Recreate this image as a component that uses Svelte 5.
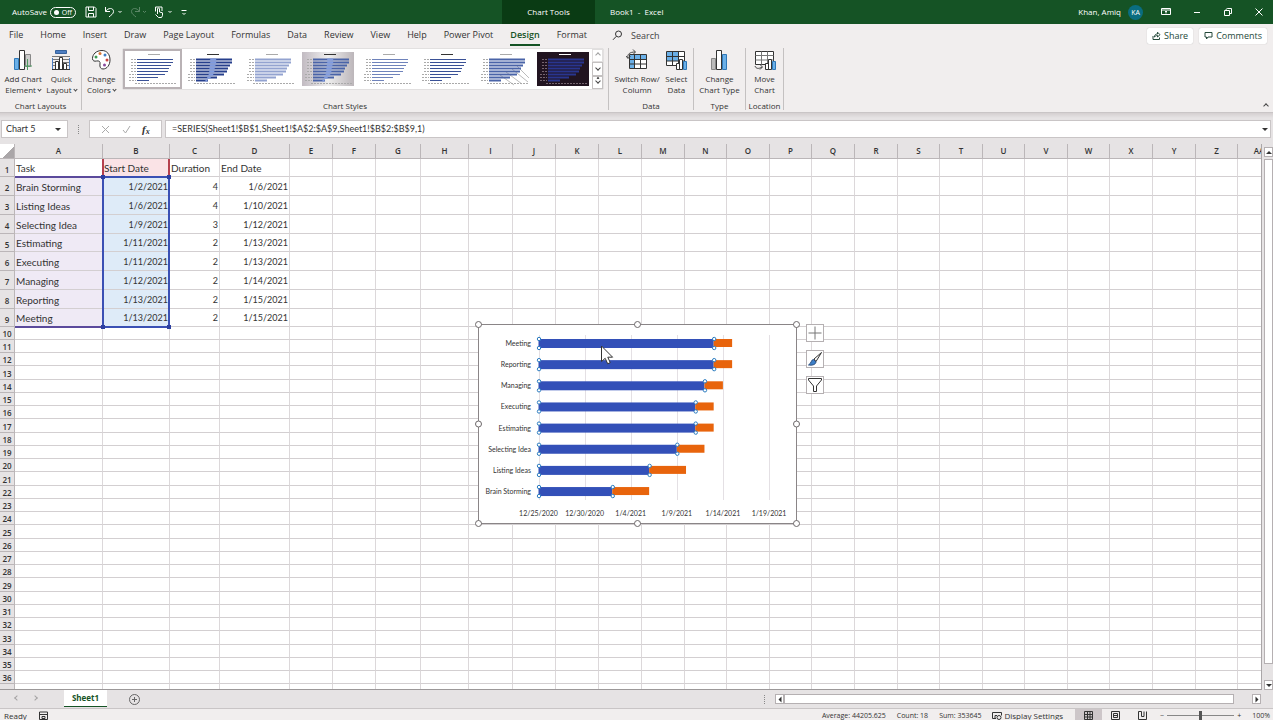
<script lang="ts">
  type Task = { name: string; start: string; duration: number; end: string; offset: number };

  const tabs = ["File", "Home", "Insert", "Draw", "Page Layout", "Formulas", "Data", "Review", "View", "Help", "Power Pivot", "Design", "Format"];

  // offset is the number of days since 12/25/2020
  const tasks: Task[] = [
    { name: "Brain Storming", start: "1/2/2021", duration: 4, end: "1/6/2021", offset: 8 },
    { name: "Listing Ideas", start: "1/6/2021", duration: 4, end: "1/10/2021", offset: 12 },
    { name: "Selecting Idea", start: "1/9/2021", duration: 3, end: "1/12/2021", offset: 15 },
    { name: "Estimating", start: "1/11/2021", duration: 2, end: "1/13/2021", offset: 17 },
    { name: "Executing", start: "1/11/2021", duration: 2, end: "1/13/2021", offset: 17 },
    { name: "Managing", start: "1/12/2021", duration: 2, end: "1/14/2021", offset: 18 },
    { name: "Reporting", start: "1/13/2021", duration: 2, end: "1/15/2021", offset: 19 },
    { name: "Meeting", start: "1/13/2021", duration: 2, end: "1/15/2021", offset: 19 }
  ];
  const bars = [...tasks].reverse();
  const axis = ["12/25/2020", "12/30/2020", "1/4/2021", "1/9/2021", "1/14/2021", "1/19/2021"];

  const columns = [..."ABCDEFGHIJKLMNOPQRSTUVWXYZ", "AA"];
  const widths = [88, 67, 50, 70, 43, 43, 45, 48, 44, 43, 43, 43, 43, 42, 43, 42, 43, 43, 42, 43, 42, 43, 42, 43, 43, 42, 43];
  const emptyCols = columns.slice(4);
  const emptyRows = Array.from({ length: 28 }, (_, i) => i + 10);

  const styles = ["plain", "bold", "light", "shaded", "thin", "plain", "lined", "dark"];
  const lengths = [36, 36, 34, 32, 31, 28, 21, 12];

  const barX = (days: number) => 64.5 + days * 9.22;
  const barY = (i: number) => 20 + i * 21.15;

  let active = "Design";
  let autosave = false;
  let name = "Chart 5";
  let formula = "=SERIES(Sheet1!$B$1,Sheet1!$A$2:$A$9,Sheet1!$B$2:$B$9,1)";
  let search = "";
  let zoom = 100;
  let picked = 0;
</script>

<div class="window">
  <header class="title">
    <div class="quick">
      <label class="autosave">
        AutoSave
        <input type="checkbox" bind:checked={autosave} />
        <span class="switch"><i></i>{autosave ? "On" : "Off"}</span>
      </label>
      <button aria-label="Save">
        <svg width="12" height="12" viewBox="0 0 12 12"><path d="M1 1h8.5L11 2.500V11H1zM3.500 1v3.500h5V1M3.500 11V7.500h5V11" /></svg>
      </button>
      <button aria-label="Undo">
        <svg width="19" height="12" viewBox="0 0 19 12"><path d="M1.500 1v4.500H6M1.500 5.500C4 1.500 9.500 1.500 9.500 5.500 9.500 8 7 9 5 11M14.500 5l1.500 1.500L17.500 5" /></svg>
      </button>
      <button class="faded" aria-label="Redo">
        <svg width="17" height="12" viewBox="0 0 17 12"><path d="M9.500 1v4.500H5M9.500 5.500C7 1.500 1.500 1.500 1.500 5.500 1.500 8 4 9 6 11M13 5l1.500 1.500L16 5" /></svg>
      </button>
      <button aria-label="Touch mode">
        <svg width="19" height="12" viewBox="0 0 19 12"><path d="M3.500 8V3a1 1 0 0 1 2 0v3l3 .8v2.700L7.500 11.500h-3L1.500 8.500M1.500 5.500V1h6.500v4M14.500 5L16 6.500 17.500 5" /></svg>
      </button>
      <button aria-label="Customize quick access">
        <svg width="8" height="12" viewBox="0 0 8 12"><path d="M1.500 4.500h5M2.500 7L4 8.500 5.500 7" /></svg>
      </button>
    </div>
    <div class="tools">Chart Tools</div>
    <div class="book">Book1&nbsp; - &nbsp;Excel</div>
    <div class="account">
      <span>Khan, Amiq</span>
      <span class="avatar">KA</span>
    </div>
    <div class="controls">
      <button aria-label="Ribbon display options">
        <svg width="10" height="10" viewBox="0 0 10 10"><path d="M.5 1.500h9v6h-9zM.5 3h9M5 6.500V4M4 5l1-1 1 1" /></svg>
      </button>
      <button aria-label="Minimize"><svg width="10" height="10" viewBox="0 0 10 10"><path d="M2 5.500h6" /></svg></button>
      <button aria-label="Restore">
        <svg width="10" height="10" viewBox="0 0 10 10"><path d="M1.500 3.500h5v5h-5zM3 3.500c0-2 1-2 2-2h3.500v5h-2" /></svg>
      </button>
      <button aria-label="Close"><svg width="10" height="10" viewBox="0 0 10 10"><path d="M1.500 1.500l7 7M8.500 1.500l-7 7" /></svg></button>
    </div>
  </header>

  <nav class="tabs">
    {#each tabs as tab}
      <button class:active={active == tab} on:click={() => (active = tab)}>{tab}</button>
    {/each}
    <label class="search">
      <svg width="11" height="11" viewBox="0 0 11 11"><circle cx="6.500" cy="4" r="3" /><path d="M4.300 6.300L1 9.800" /></svg>
      <input aria-label="Search" placeholder="Search" bind:value={search} />
    </label>
    <div class="share">
      <button>
        <svg width="9" height="9" viewBox="0 0 9 9"><path d="M1 5v3.500h6.500V6.500M2.500 6C2.500 3.500 4 3 5.500 3V1.200L8 3.700 5.500 6V4.500C4 4.500 3.500 5 2.500 6z" /></svg>
        Share
      </button>
      <button>
        <svg width="9" height="9" viewBox="0 0 9 9"><path d="M1 1.500h7v4.500H4L2.500 8V6H1z" /></svg>
        Comments
      </button>
    </div>
  </nav>

  <section class="ribbon">
    <div class="group layouts">
      <div class="items">
        <button class="big">
          <svg width="22" height="22" viewBox="0 0 22 22">
            <path d="M2.500 9.500h4v11h-4z" fill="#6bb0e8" stroke="#2f78b8" />
            <path d="M7.500 1.500h5v19h-5z" fill="#fff" stroke="#333" />
            <path d="M13.500 5.500h5v12h-5z" fill="#ccc" stroke="#888" />
            <path d="M15.500 10v11M12 17h8" stroke="#4f9c62" />
          </svg>
          <span>Add Chart<br />Element <i class="caret"></i></span>
        </button>
        <button class="big">
          <svg width="22" height="22" viewBox="0 0 22 22">
            <path d="M5.500 1.500h11v3h-11z" fill="#4d7ec2" stroke="#35619c" />
            <path d="M2 7.500h18M2 10.500h18M2 13.500h18M2 16.500h18" stroke="#777" />
            <path d="M2.500 9v11M19.500 9v11" stroke="#4d7ec2" />
            <path d="M5.500 12.500h3v8h-3zM9.500 8.500h3v12h-3zM13.500 14.500h3v6h-3z" fill="#fff" stroke="#333" />
            <path d="M2 20.500h18" stroke="#333" />
          </svg>
          <span>Quick<br />Layout <i class="caret"></i></span>
        </button>
      </div>
      <span class="caption">Chart Layouts</span>
    </div>

    <div class="group chartstyles">
      <div class="items">
        <button class="big">
          <svg width="22" height="22" viewBox="0 0 22 22">
            <path d="M12 1.500c-6 0-9.500 4-9.500 8 0 2.500 2 3 4 2.500 2.500-.5 4 .5 3.500 3-.5 3 .5 5 3 5 4 0 7-4 7-9 0-5.500-3-9.500-8-9.500z" fill="#fff" stroke="#333" />
            <g stroke="none"><circle cx="6" cy="8" r="1.500" fill="#3d9a54" /><circle cx="10" cy="4.500" r="1.500" fill="#d87434" /><circle cx="15" cy="6" r="1.500" fill="#3d7cc4" /><circle cx="17" cy="11" r="1.500" fill="#c94141" /><circle cx="14.500" cy="16" r="1.500" fill="#8a4a9c" /></g>
          </svg>
          <span>Change<br />Colors <i class="caret"></i></span>
        </button>
        <div class="gallery">
          {#each styles as style, i}
            <button class="thumb {style}" class:picked={picked == i} aria-label="Style {i + 1}" on:click={() => (picked = i)}>
              <svg width="52" height="34" viewBox="0 0 52 34">
                <path class="head" d="M22 2.500h12" />
                {#if style == "lined"}
                  <path class="hatch" d="M22 23l14 10M28 20l16 12M34 17l16 13M39 14l12 12" />
                {/if}
                {#each lengths as len, n}
                  <path class="tick" d="M{n > 4 ? 3 : 5} {7.5 + n * 3}H10" />
                  <path class="bar" d="M11 {7.5 + n * 3}h{len}" />
                  {#if style == "bold" || style == "shaded"}
                    <path class="shine" d="M{18 + len / 5} {7.5 + n * 3}h{len / 6}" />
                  {/if}
                {/each}
                <path class="foot" d="M9 31.500h42" />
              </svg>
            </button>
          {/each}
          <div class="pager">
            <button class="off" aria-label="Previous styles"><i class="arrow up"></i></button>
            <button aria-label="Next styles"><i class="arrow"></i></button>
            <button aria-label="More styles"><i class="arrow more"></i></button>
          </div>
        </div>
      </div>
      <span class="caption">Chart Styles</span>
    </div>

    <div class="group data">
      <div class="items">
        <button class="big">
          <svg width="22" height="22" viewBox="0 0 22 22">
            <path d="M3.500 5.500h17v14h-17z" fill="#fff" stroke="#333" />
            <path d="M4 6h16v4H4zM4 10h4v9H4z" fill="#6bb0e8" stroke="none" />
            <path d="M3.500 10.500h17M3.500 15h17M8.500 5.500v14M14.500 5.500v14" stroke="#333" />
            <path d="M2 9C1 5 4 3 9 3M7 .5L9.500 3 7 5.500M0 7l2 2.500L4.500 7" stroke="#444" />
          </svg>
          <span>Switch Row/<br />Column</span>
        </button>
        <button class="big">
          <svg width="22" height="22" viewBox="0 0 22 22">
            <path d="M1.500 2.500h18v14h-18z" fill="#fff" stroke="#333" />
            <path d="M2 3h11v9H2z" fill="#6bb0e8" stroke="none" />
            <path d="M1.500 7.500h18M1.500 12h18M7.500 2.500v14M13.500 2.500v14" stroke="#333" />
            <path d="M11.500 14.500h3v6h-3zM14.500 10.500h3v10h-3z" fill="#fff" stroke="#333" />
            <path d="M18.500 12.500h3v8h-3z" fill="#6bb0e8" stroke="#2f78b8" />
          </svg>
          <span>Select<br />Data</span>
        </button>
      </div>
      <span class="caption">Data</span>
    </div>

    <div class="group type">
      <div class="items">
        <button class="big">
          <svg width="22" height="22" viewBox="0 0 22 22">
            <path d="M3.500 9.500h4v11h-4z" fill="#bbb" stroke="#888" />
            <path d="M8.500 1.500h5v19h-5z" fill="#fff" stroke="#333" />
            <path d="M14.500 5.500h4v15h-4z" fill="#6bb0e8" stroke="#2f78b8" />
          </svg>
          <span>Change<br />Chart Type</span>
        </button>
      </div>
      <span class="caption">Type</span>
    </div>

    <div class="group location">
      <div class="items">
        <button class="big">
          <svg width="22" height="22" viewBox="0 0 22 22">
            <path d="M1.500 2.500h18v13h-18z" fill="#fff" stroke="#333" />
            <path d="M1.500 6.500h18M1.500 11h18M7.500 2.500v13M13.500 2.500v13" stroke="#777" />
            <path d="M1 17c1 3 4 3 7 1M6 15.500L8.500 18 6 20.500" stroke="#444" />
            <path d="M11.500 14.500h3v6h-3zM14.500 10.500h3v10h-3z" fill="#fff" stroke="#333" />
            <path d="M18.500 12.500h3v8h-3z" fill="#6bb0e8" stroke="#2f78b8" />
          </svg>
          <span>Move<br />Chart</span>
        </button>
      </div>
      <span class="caption">Location</span>
    </div>
    <button class="collapse" aria-label="Collapse the ribbon"><i class="arrow up"></i></button>
  </section>

  <div class="formulabar">
    <div class="box namebox">
      <input aria-label="Name box" bind:value={name} />
      <button aria-label="Names"><i class="solid"></i></button>
    </div>
    <span class="grip"></span>
    <div class="box fx">
      <button aria-label="Cancel"><svg width="9" height="9" viewBox="0 0 9 9"><path d="M1 1l7 7M8 1L1 8" stroke="#aaa" /></svg></button>
      <button aria-label="Enter"><svg width="9" height="9" viewBox="0 0 9 9"><path d="M1 5l2.500 3L8 1" stroke="#aaa" /></svg></button>
      <button class="func">f<sub>x</sub></button>
    </div>
    <div class="box formula">
      <input aria-label="Formula" bind:value={formula} />
      <button aria-label="Expand formula bar"><i class="solid"></i></button>
    </div>
  </div>

  <main>
    <div class="sheet">
      <table>
        <colgroup>
          <col class="gutter" />
          {#each widths as w}
            <col style="width: {w}px" />
          {/each}
        </colgroup>
        <thead>
          <tr>
            <th class="corner"></th>
            {#each columns as col}
              <th>{col}</th>
            {/each}
          </tr>
        </thead>
        <tbody>
          <tr class="labels">
            <th>1</th>
            <td>Task</td>
            <td class="red">Start Date</td>
            <td>Duration</td>
            <td>End Date</td>
            {#each emptyCols as _}<td></td>{/each}
          </tr>
          {#each tasks as task, i}
            <tr class="task">
              <th>{i + 2}</th>
              <td class="purple">{task.name}</td>
              <td class="blue num">{task.start}</td>
              <td class="num">{task.duration}</td>
              <td class="num">{task.end}</td>
              {#each emptyCols as _}<td></td>{/each}
            </tr>
          {/each}
          {#each emptyRows as row}
            <tr class="empty">
              <th>{row}</th>
              {#each columns as _}<td></td>{/each}
            </tr>
          {/each}
        </tbody>
      </table>

      <div class="range series"></div>
      <div class="range categories"></div>
      <div class="range values"><i></i><i></i><i></i><i></i></div>

      <div class="chart">
        <svg width="328" height="210" viewBox="0 0 328 210">
          <rect class="frame" x="4.500" y="5.500" width="318" height="199" />
          {#each axis as label, i}
            <path class="gridline" d="M{Math.round(barX(i * 5)) + 0.5} 16V181" />
            <text class="date" x={barX(i * 5)} y="197">{label}</text>
          {/each}
          {#each bars as bar, i}
            <text class="task-name" x="57" y={barY(i) + 7}>{bar.name}</text>
            <rect class="start" x={barX(0)} y={barY(i)} width={bar.offset * 9.22} height="9" />
            <rect class="duration" x={barX(bar.offset)} y={barY(i)} width={bar.duration * 9.22} height="8" />
            {#each [0, bar.offset] as day}
              <circle class="dot" cx={barX(day) + 0.5} cy={barY(i)} r="1.700" />
              <circle class="dot" cx={barX(day) + 0.5} cy={barY(i) + 9} r="1.700" />
            {/each}
          {/each}
          {#each [4.5, 163.5, 322.5] as x}
            {#each [5.5, 105, 204.5] as y}
              {#if x != 163.5 || y != 105}
                <circle class="handle" cx={x} cy={y} r="3" />
              {/if}
            {/each}
          {/each}
          <path class="cursor" d="M127.500 27v15.500l3.700-3.200 2.500 5.500 2.500-1.200-2.400-5.400h4.800z" />
        </svg>
        <div class="side">
          <button aria-label="Chart elements">
            <svg width="16" height="16" viewBox="0 0 16 16"><path d="M8 1.500v13M1.500 8h13" stroke="#777" /></svg>
          </button>
          <button aria-label="Chart styles">
            <svg width="16" height="16" viewBox="0 0 16 16">
              <path d="M14.500 1.500L7 8l2 2.500z" fill="#fff" stroke="#333" />
              <path d="M6.500 8.500c-2.500 0-2 4-5 5.500 3 .5 7 0 7.500-3z" fill="#3c7fc8" stroke="#2b4e7e" />
            </svg>
          </button>
          <button aria-label="Chart filters">
            <svg width="16" height="16" viewBox="0 0 16 16"><path d="M1.500 1.500h13v1.500L9.500 9v5.500h-3V9l-5-6z" fill="#fff" stroke="#333" /></svg>
          </button>
        </div>
      </div>
    </div>
    <div class="vscroll">
      <button aria-label="Scroll up"><i class="solid up"></i></button>
      <div class="bar"></div>
      <button aria-label="Scroll down"><i class="solid"></i></button>
    </div>
  </main>

  <div class="sheets">
    <div class="arrows">
      <button aria-label="Previous sheet"><i class="arrow left"></i></button>
      <button aria-label="Next sheet"><i class="arrow right"></i></button>
    </div>
    <button class="sheet-tab">Sheet1</button>
    <button class="add" aria-label="New sheet">
      <svg width="13" height="13" viewBox="0 0 13 13"><circle cx="6.500" cy="6.500" r="5" /><path d="M6.500 4v5M4 6.500h5" /></svg>
    </button>
    <span class="grip"></span>
    <div class="hscroll">
      <button aria-label="Scroll left"><i class="solid left"></i></button>
      <div class="bar"></div>
      <button aria-label="Scroll right"><i class="solid right"></i></button>
    </div>
  </div>

  <footer>
    <span>Ready</span>
    <svg width="9" height="9" viewBox="0 0 9 9"><path d="M.5 1h8M.5 1v7.500h8V1M.5 3.500h8M3 5.500h3v2H3z" /></svg>
    <div class="stats">
      <span>Average: 44205.625</span>
      <span>Count: 18</span>
      <span>Sum: 353645</span>
      <button class="display">
        <svg width="10" height="9" viewBox="0 0 10 9"><path d="M4 7.500H.5v-6h9v3M3 7.500V4.500h2" /><circle cx="7" cy="6.500" r="2" /></svg>
        Display Settings
      </button>
    </div>
    <div class="views">
      <button class="on" aria-label="Normal"><svg width="9" height="9" viewBox="0 0 9 9"><path d="M.5.5h8v8h-8zM.5 3.500h8M.5 6h8M3.500.5v8M6 .5v8" /></svg></button>
      <button aria-label="Page layout"><svg width="9" height="9" viewBox="0 0 9 9"><path d="M.5.5h8v8h-8zM2.500 2.500h4v4h-4zM3 4.500h3" /></svg></button>
      <button aria-label="Page break preview"><svg width="9" height="9" viewBox="0 0 9 9"><path d="M.5.500v8h8v-8M3.500.5v5M6 .5v5h-2.500M.5.5h3" /></svg></button>
    </div>
    <div class="zoom">
      <button aria-label="Zoom out">−</button>
      <input type="range" min="10" max="190" aria-label="Zoom" bind:value={zoom} />
      <button aria-label="Zoom in">+</button>
      <span>{zoom}%</span>
    </div>
  </footer>
</div>

<style>
  :global(body) {
    margin: 0;
    overflow: hidden;
  }

  .window {
    display: flex;
    flex-direction: column;
    height: 100vh;
    background: #e6e3e4;
    color: #333;
    font-family: "Open Sans", "Noto Sans", sans-serif;
    font-size: 9px;
    line-height: 12px;
  }

  button,
  input {
    margin: 0;
    padding: 0;
    border: none;
    background: none;
    color: inherit;
    font: inherit;
    outline: none;
    white-space: nowrap;
  }

  svg {
    display: block;
    flex: none;
    fill: none;
    stroke: currentColor;
  }

  /* title bar */
  .title {
    display: flex;
    flex: none;
    height: 24px;
    background: #155325;
    color: #fff;
    font-size: 8px;
    align-items: center;
  }

  .quick {
    display: flex;
    width: 490px;
    padding-left: 12px;
    align-items: center;
    gap: 7px;
  }

  .autosave {
    display: flex;
    align-items: center;
    gap: 3px;
    margin-right: 2px;
  }

  .autosave input {
    position: absolute;
    opacity: 0;
  }

  .switch {
    display: flex;
    box-sizing: border-box;
    width: 26px;
    height: 11px;
    padding: 0 3px;
    border: 1px solid #fff;
    border-radius: 6px;
    align-items: center;
    justify-content: space-between;
    font-size: 7px;
    line-height: 9px;
  }

  .switch i {
    width: 5px;
    height: 5px;
    border-radius: 50%;
    background: #fff;
  }

  .faded {
    opacity: 0.3;
  }

  .tools {
    width: 93px;
    background: #0a3b14;
    line-height: 24px;
    text-align: center;
  }

  .book {
    padding-left: 15px;
  }

  .account {
    display: flex;
    margin-left: auto;
    align-items: center;
    gap: 7px;
  }

  .avatar {
    width: 15px;
    border-radius: 50%;
    background: #0a6d80;
    font-size: 7px;
    line-height: 15px;
    text-align: center;
  }

  .controls {
    display: flex;
    padding: 0 9px 0 18px;
    gap: 21px;
  }

  /* ribbon tabs */
  .tabs {
    display: flex;
    flex: none;
    height: 23px;
    padding: 0 6px 0 9px;
    background: #f1eeee;
    align-items: center;
    gap: 17px;
  }

  .tabs > button {
    height: 20px;
    border-bottom: 2px solid transparent;
    box-sizing: border-box;
  }

  .tabs .active {
    border-color: #155325;
    color: #155325;
    font-weight: 600;
  }

  .search {
    display: flex;
    margin-left: 8px;
    align-items: center;
    gap: 8px;
  }

  .search input {
    width: 60px;
  }

  .search input::placeholder {
    color: #444;
    opacity: 1;
  }

  .share {
    display: flex;
    margin-left: auto;
    gap: 6px;
  }

  .share button {
    display: flex;
    height: 16px;
    padding: 0 5px;
    border-radius: 2px;
    background: #fff;
    box-shadow: 0 0 1px #aaa;
    align-items: center;
    gap: 3px;
    color: #24493a;
  }

  /* ribbon */
  .ribbon {
    display: flex;
    flex: none;
    height: 65px;
    background: #f1eeee;
    border-bottom: 1px solid #c9c5c6;
  }

  .group {
    display: flex;
    flex-direction: column;
    box-sizing: border-box;
    height: 62px;
    margin-top: 1px;
    padding-top: 1px;
    border-right: 1px solid #c4c1c1;
    align-items: center;
    justify-content: space-between;
  }

  .items {
    display: flex;
    width: 100%;
    justify-content: space-evenly;
  }

  .layouts {
    width: 82px;
  }

  .chartstyles {
    width: 527px;
  }

  .data {
    width: 85px;
  }

  .type {
    width: 52px;
  }

  .location {
    width: 38px;
  }

  .chartstyles .items {
    box-sizing: border-box;
    padding: 0 5px;
    justify-content: space-between;
  }

  .big {
    display: flex;
    flex-direction: column;
    align-items: center;
    gap: 2px;
    font-size: 8px;
    line-height: 11px;
  }

  .caption {
    font-size: 8px;
    line-height: 8px;
  }

  .caret,
  .arrow {
    display: inline-block;
    width: 3px;
    height: 3px;
    border: solid #444;
    border-width: 0 1px 1px 0;
    box-sizing: border-box;
    transform: rotate(45deg);
    vertical-align: 2px;
  }

  .arrow {
    width: 4px;
    height: 4px;
  }

  .arrow.up {
    transform: rotate(225deg);
  }

  .arrow.left {
    transform: rotate(135deg);
  }

  .arrow.right {
    transform: rotate(-45deg);
  }

  .gallery {
    display: flex;
    width: 480px;
    height: 40px;
    background: #fff;
    box-shadow: 0 0 1px #999;
  }

  .thumb {
    display: flex;
    flex: 1;
    border: 2px solid transparent;
    align-items: center;
    justify-content: center;
  }

  .thumb.picked {
    border-color: #b9b2b5;
  }

  .head {
    stroke: #aaa;
  }

  .tick,
  .foot {
    stroke: #aaa;
    stroke-dasharray: 2 1;
  }

  .thumb .bar {
    stroke: #4a64a8;
    stroke-width: 2;
  }

  .thumb.plain .bar {
    stroke: #3a5196;
    stroke-width: 1;
  }

  .thumb.bold .bar {
    stroke: #263f8c;
  }

  .shine {
    stroke: #7f9be0;
    stroke-width: 2;
  }

  .bold .head,
  .shaded .head,
  .plain:not(.picked) .head {
    stroke: #333;
  }

  .thumb.light .bar {
    stroke: #93a3d0;
  }

  .thumb.thin .bar {
    stroke: #6f83bb;
    stroke-width: 1;
  }

  .hatch {
    stroke: #bbb;
  }

  .shaded svg {
    background: linear-gradient(90deg, #c2bbc2, #eee, #bcb6ba);
  }

  .dark svg {
    background: #211420;
  }

  .dark .head {
    stroke: #fff;
  }

  .thumb.dark .bar {
    stroke: #29358f;
  }

  .dark .tick,
  .dark .foot {
    stroke: #75656f;
  }

  .pager {
    display: flex;
    flex-direction: column;
    width: 11px;
  }

  .pager button {
    flex: 1;
    border: 1px solid #c4c1c1;
    line-height: 8px;
  }

  .pager .off {
    opacity: 0.5;
  }

  .arrow.more {
    box-shadow: -2px -2px 0 -1px #444;
  }

  .collapse {
    margin: auto 5px 0 auto;
    line-height: 10px;
  }

  /* formula bar */
  .formulabar {
    display: flex;
    flex: none;
    height: 18px;
    padding: 7px 2px 6px 1px;
    background: linear-gradient(#d4cfd0, #e6e3e4 5px);
    font-family: Lato, sans-serif;
    align-items: center;
  }

  .box {
    display: flex;
    box-sizing: border-box;
    height: 18px;
    border: 1px solid #c9c5c6;
    background: #fff;
    align-items: center;
  }

  .namebox {
    width: 67px;
    padding: 0 6px 0 4px;
  }

  .namebox input,
  .formula input {
    flex: 1;
    min-width: 0;
  }

  .grip {
    width: 1px;
    height: 9px;
    margin: 0 10px;
    border-left: 1px dotted #888;
    box-sizing: border-box;
  }

  .fx {
    width: 73px;
    margin-right: 3px;
    justify-content: space-evenly;
  }

  .func {
    font-family: "Liberation Serif", serif;
    font-size: 11px;
    font-style: italic;
    font-weight: bold;
  }

  .func sub {
    font-size: 8px;
    line-height: 0;
    vertical-align: -1px;
  }

  .formula {
    flex: 1;
    padding: 0 2px 0 6px;
  }

  .solid {
    display: block;
    width: 0;
    height: 0;
    border: 3px solid transparent;
    border-top-color: #333;
    border-bottom: none;
  }

  .solid.up {
    transform: rotate(180deg);
  }

  .solid.left {
    transform: rotate(90deg);
  }

  .solid.right {
    transform: rotate(-90deg);
  }

  /* worksheet */
  main {
    display: flex;
    flex: 1;
    min-height: 0;
  }

  .sheet {
    position: relative;
    flex: 1;
    min-width: 0;
    overflow: hidden;
    border-right: 1px solid #aaa6a8;
    border-bottom: 1px solid #9c9899;
    background: #fff;
  }

  table {
    width: 1262px;
    border-spacing: 0;
    table-layout: fixed;
    font-family: Lato, sans-serif;
    font-size: 10px;
    line-height: 12px;
  }

  .gutter {
    width: 15px;
  }

  td,
  th {
    box-sizing: border-box;
    padding: 0 1px;
    border-right: 1px solid #dcd8da;
    border-bottom: 1px solid #d3cfd1;
    overflow: hidden;
    white-space: nowrap;
  }

  th {
    padding: 0;
    border-color: #bbb6b8;
    background: #e6e3e4;
    font-family: "Open Sans", "Noto Sans", sans-serif;
    font-size: 8px;
    font-weight: 600;
    text-align: center;
  }

  thead th {
    height: 15px;
  }

  .corner {
    background: linear-gradient(135deg, transparent 60%, #aaa6a8 60%);
  }

  tbody th {
    padding-top: 2px;
    line-height: 10px;
  }

  .labels th,
  .task th {
    padding-top: 4px;
  }

  .labels td {
    height: 18px;
  }

  .task td {
    height: 19px;
    padding-top: 1px;
  }

  .task:nth-child(4n + 1) td {
    height: 18px;
  }

  .empty td {
    height: 13px;
  }

  .empty:nth-child(4n + 1) td {
    height: 14px;
  }

  .task .num {
    font-size: 9px;
    text-align: right;
  }

  .red {
    background: #fae3e6;
  }

  .purple {
    background: #efeaf5;
  }

  .blue {
    background: #deebf8;
  }

  .range {
    position: absolute;
    box-sizing: border-box;
    pointer-events: none;
  }

  .series {
    left: 102px;
    top: 15px;
    width: 68px;
    height: 18px;
    border: solid #b5404e;
    border-width: 0 2px;
  }

  .categories {
    left: 15px;
    top: 32px;
    width: 87px;
    height: 152px;
    border: solid #5b4a9c;
    border-width: 2px 0;
  }

  .values {
    left: 102px;
    top: 32px;
    width: 68px;
    height: 152px;
    border: 2px solid #3a50b4;
  }

  .values i {
    position: absolute;
    top: -3px;
    left: -3px;
    width: 4px;
    height: 4px;
    background: #2c3fa0;
  }

  .values i:nth-child(even) {
    right: -3px;
    left: auto;
  }

  .values i:nth-child(n + 3) {
    top: auto;
    bottom: -3px;
  }

  /* floating chart */
  .chart {
    position: absolute;
    left: 474px;
    top: 175px;
    display: flex;
    gap: 4px;
  }

  .frame {
    fill: #fff;
    stroke: #8a8587;
  }

  .gridline {
    stroke: #e4e0e4;
  }

  .chart text {
    fill: #333;
    stroke: none;
    font-family: Lato, sans-serif;
    font-size: 7px;
  }

  .date {
    text-anchor: middle;
  }

  .task-name {
    text-anchor: end;
  }

  .start {
    fill: #3350b8;
    stroke: none;
  }

  .duration {
    fill: #e8640c;
    stroke: none;
  }

  .dot {
    fill: #fff;
    stroke: #2b7cc0;
  }

  .handle {
    fill: #fff;
    stroke: #6d686a;
  }

  .cursor {
    fill: #fff;
    stroke: #333;
  }

  .side {
    display: flex;
    flex-direction: column;
    padding-top: 5px;
    gap: 8px;
  }

  .side button {
    display: flex;
    width: 18px;
    height: 18px;
    border: 1px solid #b5b0b2;
    background: #fff;
    box-sizing: border-box;
    align-items: center;
    justify-content: center;
  }

  /* scrollbars */
  .vscroll {
    display: flex;
    flex-direction: column;
    width: 9px;
    padding: 3px 0 0 2px;
  }

  .vscroll button,
  .hscroll button {
    display: flex;
    flex: none;
    width: 9px;
    height: 10px;
    border: 1px solid #b5b0b2;
    box-sizing: border-box;
    background: #fff;
    align-items: center;
    justify-content: center;
  }

  .vscroll .bar,
  .hscroll .bar {
    flex: 1;
    border: 1px solid #b5b0b2;
    background: #fff;
  }

  .vscroll .bar {
    margin: 2px 0 16px;
  }

  /* sheet tabs */
  .sheets {
    display: flex;
    flex: none;
    height: 19px;
    padding-right: 12px;
    border-bottom: 1px solid #c9c5c6;
    box-sizing: border-box;
    align-items: center;
  }

  .arrows {
    display: flex;
    width: 64px;
    padding-left: 15px;
    box-sizing: border-box;
    gap: 14px;
    opacity: 0.4;
  }

  .sheet-tab {
    align-self: flex-start;
    width: 43px;
    height: 17px;
    border-bottom: 1px solid #155325;
    background: #fff;
    box-sizing: border-box;
    color: #155325;
    font-size: 8px;
    font-weight: bold;
  }

  .add {
    margin-left: 21px;
    color: #666;
  }

  .sheets .grip {
    margin-left: auto;
  }

  .hscroll {
    display: flex;
    width: 39%;
    max-width: 486px;
    height: 10px;
  }

  .hscroll .bar {
    box-sizing: border-box;
    margin-right: 18px;
  }

  /* status bar */
  footer {
    display: flex;
    flex: none;
    height: 11px;
    padding: 0 3px 0 4px;
    background: #f1eeee;
    font-size: 8px;
    line-height: 13px;
    overflow: hidden;
  }

  footer > span {
    margin-right: 12px;
  }

  footer svg {
    margin-top: 2px;
  }

  .stats {
    display: flex;
    margin-left: auto;
    gap: 11px;
    font-size: 7px;
  }

  .display {
    display: flex;
    gap: 2px;
    font-size: 8px;
  }

  .views {
    display: flex;
    margin-left: 12px;
  }

  .views button {
    display: flex;
    width: 27px;
    height: 13px;
    justify-content: center;
  }

  .views .on {
    background: #cdc6c9;
  }

  .zoom {
    display: flex;
    height: 13px;
    margin-left: 4px;
    align-items: center;
    gap: 3px;
    font-size: 7px;
  }

  .zoom input {
    appearance: none;
    width: 67px;
    height: 1px;
    background: #888;
  }

  .zoom input::-webkit-slider-thumb {
    appearance: none;
    width: 3px;
    height: 9px;
    background: #555;
  }

  .zoom span {
    margin-left: 8px;
  }
</style>
